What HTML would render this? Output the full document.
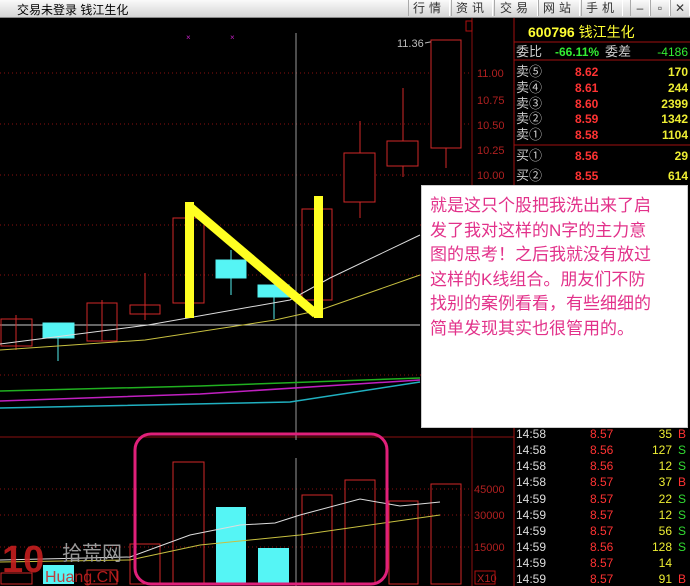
<!DOCTYPE html>
<html><head><meta charset="utf-8"><style>
body{margin:0;width:690px;height:586px;background:#000;overflow:hidden;font-family:"Liberation Sans","Noto Sans CJK SC",sans-serif;position:relative}
.tb{position:absolute;left:0;top:0;width:690px;height:17px;background:linear-gradient(#fafafa,#d4d4d4);border-bottom:1px solid #888}
.tb .t{position:absolute;left:17px;top:1px;font-size:12px;color:#000}
.btn{position:absolute;top:0;height:16px;font-size:12px;color:#333;border-left:1px solid #aaa;border-right:1px solid #fff;text-align:center;letter-spacing:4px;line-height:16px}
svg{position:absolute;left:0;top:0}
.box{position:absolute;left:421px;top:185px;width:267px;height:243px;background:#fff;border:1px solid #ccc;box-sizing:border-box;padding:8px 0 0 8px;color:#e2318a;font-size:17px;line-height:24.5px;font-family:"Liberation Sans","Noto Sans CJK SC",sans-serif}
</style></head><body>
<div class="tb"><span class="t">交易未登录 钱江生化</span>
<div class="btn" style="left:408px;width:40px">行情</div>
<div class="btn" style="left:451px;width:40px">资讯</div>
<div class="btn" style="left:494px;width:42px">交易</div>
<div class="btn" style="left:538px;width:40px">网站</div>
<div class="btn" style="left:581px;width:40px">手机</div>
<div class="btn" style="left:630px;width:18px;letter-spacing:0">–</div>
<div class="btn" style="left:650px;width:18px;letter-spacing:0">▫</div>
<div class="btn" style="left:670px;width:18px;letter-spacing:0">✕</div>
</div>
<svg width="690" height="586" font-family="Liberation Sans, Noto Sans CJK SC, sans-serif">
<g stroke="#8a1010" stroke-dasharray="1,3" stroke-width="1">
<line x1="0" y1="73" x2="472" y2="73"/><line x1="0" y1="124" x2="472" y2="124"/><line x1="0" y1="175" x2="472" y2="175"/><line x1="0" y1="225" x2="472" y2="225"/><line x1="0" y1="275" x2="472" y2="275"/><line x1="0" y1="375" x2="472" y2="375"/>
<line x1="0" y1="489" x2="472" y2="489"/><line x1="0" y1="515" x2="472" y2="515"/><line x1="0" y1="547" x2="472" y2="547"/>
</g>
<line x1="0" y1="437" x2="514" y2="437" stroke="#8a1010"/>
<line x1="472" y1="18" x2="472" y2="586" stroke="#8a1010"/>
<line x1="514" y1="18" x2="514" y2="586" stroke="#a01010"/>
<rect x="466" y="21" width="6" height="10" fill="none" stroke="#b01010"/>
<g fill="#b02020" font-size="11"><text x="477" y="77">11.00</text><text x="477" y="104">10.75</text><text x="477" y="129">10.50</text><text x="477" y="154">10.25</text><text x="477" y="179">10.00</text>
<text x="474" y="493">45000</text><text x="474" y="519">30000</text><text x="474" y="551">15000</text><text x="477" y="582">X10</text></g>
<rect x="475" y="571" width="20" height="13" fill="none" stroke="#b01010"/>
<text x="397" y="47" fill="#bbb" font-size="11">11.36</text><line x1="425" y1="43" x2="440" y2="40" stroke="#bbb"/>
<text x="186" y="40" fill="#c020c0" font-size="8">×</text><text x="230" y="40" fill="#c020c0" font-size="8">×</text>
<line x1="296" y1="33" x2="296" y2="440" stroke="#999"/><line x1="296" y1="458" x2="296" y2="586" stroke="#999"/>
<line x1="0" y1="325" x2="420" y2="325" stroke="#ccc"/>
<g fill="none" stroke-width="1.5">
<polyline points="0,391 200,386 420,378" stroke="#20b020"/>
<polyline points="0,401 200,394 420,380" stroke="#c020c0"/>
<polyline points="0,408 290,402 420,382" stroke="#20b0c0"/>
</g>
<g stroke="#d02828" fill="none">
<line x1="16" y1="315" x2="16" y2="350"/><rect x="1" y="319" width="31" height="27"/>
<line x1="102" y1="300" x2="102" y2="341"/><rect x="87" y="303" width="30" height="38"/>
<line x1="145" y1="273" x2="145" y2="320"/><rect x="130" y="305" width="30" height="9"/>
<rect x="173" y="218" width="31" height="85"/>
<rect x="302" y="209" width="30" height="91"/>
<line x1="360" y1="121" x2="360" y2="218"/><rect x="344" y="153" width="31" height="49" fill="#000"/>
<line x1="403" y1="88" x2="403" y2="177"/><rect x="387" y="141" width="31" height="25" fill="#000"/>
<line x1="446" y1="40" x2="446" y2="168"/><rect x="431" y="40" width="30" height="108" fill="#000"/>
</g>
<g stroke="#55eeee" fill="#55f5f5">
<line x1="58" y1="323" x2="58" y2="361"/><rect x="43" y="323" width="31" height="15"/>
<line x1="231" y1="250" x2="231" y2="295"/><rect x="216" y="260" width="30" height="18"/>
<line x1="274" y1="285" x2="274" y2="319"/><rect x="258" y="285" width="31" height="12"/>
</g>
<polyline points="0,344 148,325 290,300 330,278 420,235" fill="none" stroke="#ddd"/>
<polyline points="0,350 145,340 275,320 320,310 420,275" fill="none" stroke="#c8c040"/>
<g fill="#ffff22"><rect x="185" y="202" width="9" height="116"/><rect x="314" y="196" width="9" height="122"/></g>
<line x1="190" y1="207" x2="316" y2="314" stroke="#ffff22" stroke-width="9"/>
<g stroke="#d02828" fill="none">
<rect x="1" y="573" width="31" height="11"/><rect x="87" y="570" width="30" height="14"/><rect x="130" y="544" width="30" height="40"/>
<rect x="173" y="462" width="31" height="122"/><rect x="302" y="495" width="30" height="89"/><rect x="345" y="480" width="30" height="104"/><rect x="389" y="501" width="29" height="83"/><rect x="431" y="484" width="30" height="100"/>
</g>
<g fill="#55f5f5"><rect x="43" y="565" width="31" height="19"/><rect x="216" y="507" width="30" height="77"/><rect x="258" y="548" width="31" height="36"/></g>
<polyline points="0,560 130,557 190,535 240,525 275,523 300,515 360,499 400,506 440,502" fill="none" stroke="#ddd"/>
<polyline points="0,562 130,560 200,545 300,535 440,515" fill="none" stroke="#c8c040"/>
<rect x="135" y="434" width="252" height="150" rx="16" fill="none" stroke="#e0207a" stroke-width="3"/>
<text x="2" y="572" fill="#d02020" font-size="38" font-weight="bold" opacity="0.85">10</text>
<text x="62" y="560" fill="#999" font-size="20">拾荒网</text>
<text x="45" y="582" fill="#d02020" font-size="16" opacity="0.85">Huang.CN</text>
<text x="528" y="37" fill="#ffff33" font-size="14" font-weight="bold">600796 <tspan font-weight="normal">钱江生化</tspan></text>
<line x1="514" y1="42" x2="690" y2="42" stroke="#a01010"/>
<g font-size="13">
<text x="516" y="56" fill="#ccc">委比</text><text x="555" y="56" fill="#33ee33" font-weight="bold" font-size="12">-66.11%</text><text x="605" y="56" fill="#ccc">委差</text><text x="688" y="56" fill="#33ee33" font-size="12" text-anchor="end">-4186</text>
</g>
<line x1="514" y1="60" x2="690" y2="60" stroke="#a01010"/>
<g font-size="13" fill="#ccc"><text x="516" y="76">卖⑤</text><text x="516" y="92">卖④</text><text x="516" y="108">卖③</text><text x="516" y="123">卖②</text><text x="516" y="139">卖①</text><text x="516" y="160">买①</text><text x="516" y="180">买②</text></g>
<g font-size="12" fill="#ff3333" font-weight="bold"><text x="575" y="76">8.62</text><text x="575" y="92">8.61</text><text x="575" y="108">8.60</text><text x="575" y="123">8.59</text><text x="575" y="139">8.58</text><text x="575" y="160">8.56</text><text x="575" y="180">8.55</text></g>
<g font-size="12" fill="#eeee33" font-weight="bold" text-anchor="end"><text x="688" y="76">170</text><text x="688" y="92">244</text><text x="688" y="108">2399</text><text x="688" y="123">1342</text><text x="688" y="139">1104</text><text x="688" y="160">29</text><text x="688" y="180">614</text></g>
<line x1="514" y1="145" x2="690" y2="145" stroke="#a01010"/>
<g font-size="12">
<g fill="#ddd"><text x="516" y="438">14:58</text><text x="516" y="454">14:58</text><text x="516" y="470">14:58</text><text x="516" y="486">14:58</text><text x="516" y="503">14:59</text><text x="516" y="519">14:59</text><text x="516" y="535">14:59</text><text x="516" y="551">14:59</text><text x="516" y="567">14:59</text><text x="516" y="583">14:59</text></g>
<g fill="#ff3333"><text x="590" y="438">8.57</text><text x="590" y="454">8.56</text><text x="590" y="470">8.56</text><text x="590" y="486">8.57</text><text x="590" y="503">8.57</text><text x="590" y="519">8.57</text><text x="590" y="535">8.57</text><text x="590" y="551">8.56</text><text x="590" y="567">8.57</text><text x="590" y="583">8.57</text></g>
<g fill="#eeee33" text-anchor="end"><text x="672" y="438">35</text><text x="672" y="454">127</text><text x="672" y="470">12</text><text x="672" y="486">37</text><text x="672" y="503">22</text><text x="672" y="519">12</text><text x="672" y="535">56</text><text x="672" y="551">128</text><text x="672" y="567">14</text><text x="672" y="583">91</text></g>
<g><text x="678" y="438" fill="#ff3333">B</text><text x="678" y="454" fill="#33dd33">S</text><text x="678" y="470" fill="#33dd33">S</text><text x="678" y="486" fill="#ff3333">B</text><text x="678" y="503" fill="#33dd33">S</text><text x="678" y="519" fill="#33dd33">S</text><text x="678" y="535" fill="#33dd33">S</text><text x="678" y="551" fill="#33dd33">S</text><text x="678" y="583" fill="#ff3333">B</text></g>
</g>
</svg>
<div class="box">就是这只个股把我洗出来了启<br>发了我对这样的N字的主力意<br>图的思考！之后我就没有放过<br>这样的K线组合。朋友们不防<br>找别的案例看看，有些细细的<br>简单发现其实也很管用的。</div>
</body></html>
